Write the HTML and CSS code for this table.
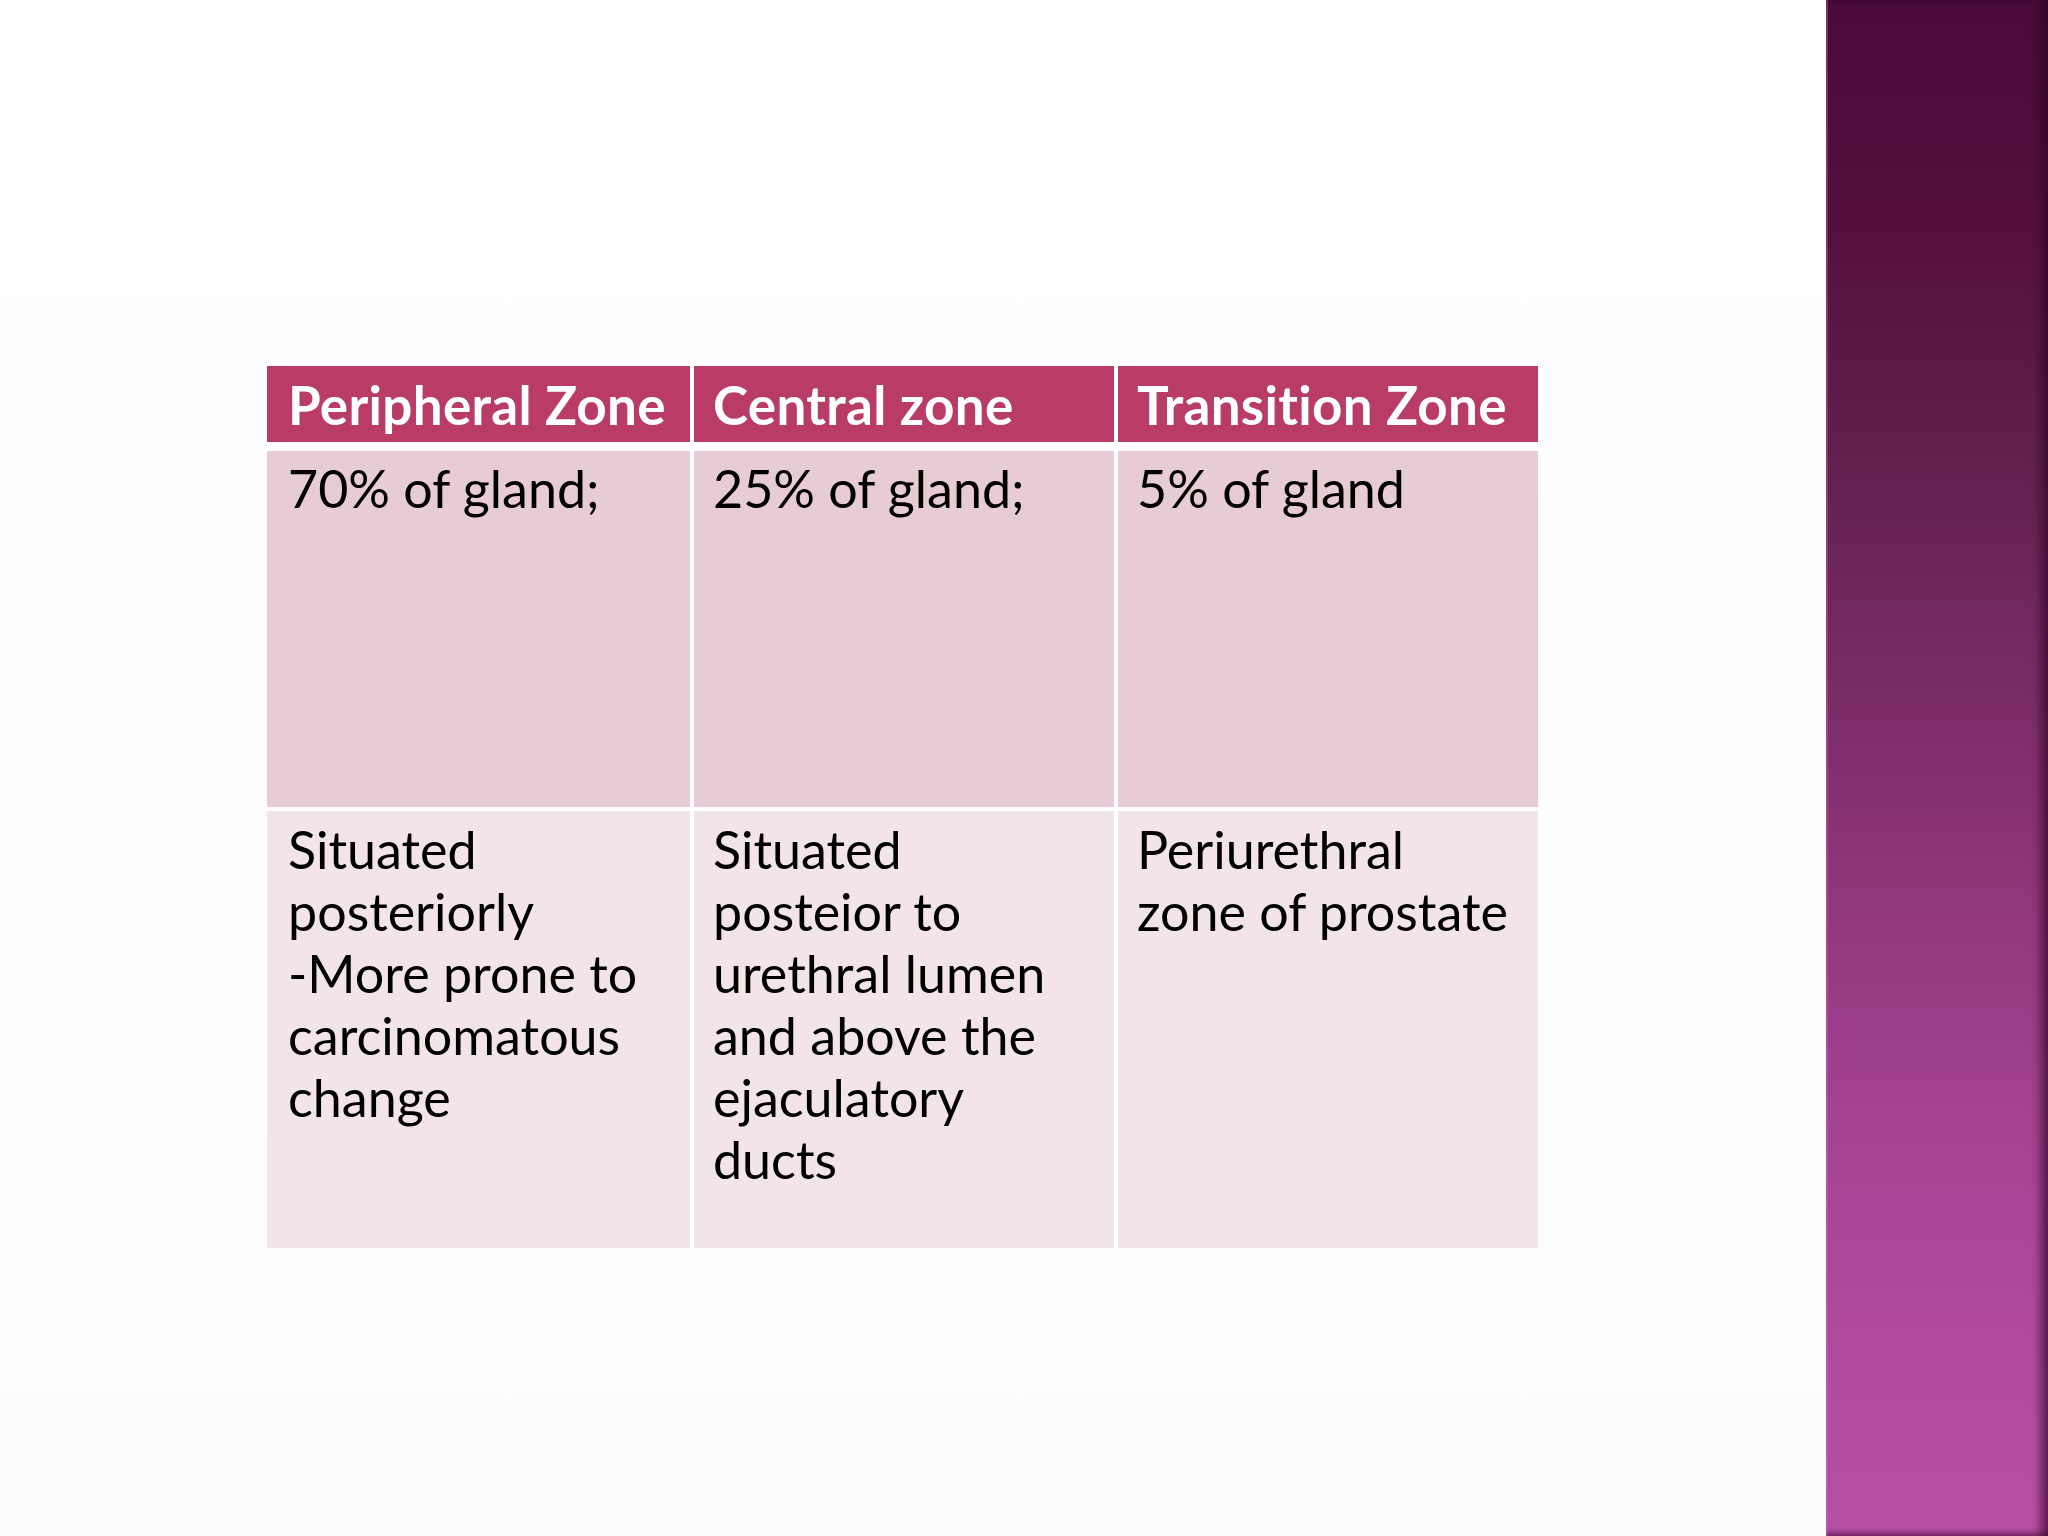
FILE: index.html
```html
<!DOCTYPE html>
<html lang="en">
<head>
<meta charset="utf-8">
<title>Prostate zones</title>
<link rel="stylesheet" href="styles.css">
</head>
<body>
<div class="slide">
  <main class="content">
    <div class="zones">
      <div class="cell head">Peripheral Zone</div>
      <div class="cell head">Central zone</div>
      <div class="cell head">Transition Zone</div>

      <div class="cell dark">70% of gland;</div>
      <div class="cell dark">25% of gland;</div>
      <div class="cell dark">5% of gland</div>

      <div class="cell light">Situated<br>posteriorly<br>-More prone to<br>carcinomatous<br>change</div>
      <div class="cell light">Situated<br>posteior to<br>urethral lumen<br>and above the<br>ejaculatory<br>ducts</div>
      <div class="cell light">Periurethral<br>zone of prostate</div>
    </div>
  </main>
  <aside class="sidebar"></aside>
</div>
</body>
</html>
```

FILE: styles.css
```css
html, body {
  margin: 0;
  padding: 0;
  width: 2048px;
  height: 1536px;
  overflow: hidden;
}

body {
  font-family: Lato, "Noto Sans", sans-serif;
  background: #fefefe;
}

.slide {
  display: flex;
  width: 2048px;
  height: 1536px;
}

.content {
  width: 1826px;
  height: 1536px;
  box-sizing: border-box;
  padding: 366px 0 0 267px;
  background: linear-gradient(180deg, #ffffff 0%, #fdfcfd 100%);
}

.zones {
  display: grid;
  width: 1271px;
  grid-template-columns: 423px 424px 424px;
  grid-template-rows: 76px 365px 441px;
}

.cell {
  box-sizing: border-box;
  font-size: 52px;
  line-height: 62px;
  color: #000000;
  padding: 6px 12px 0 19px;
  border-left: 4px solid #ffffff;
  white-space: nowrap;
}

.cell:nth-child(3n+1) {
  border-left: 0;
  padding-left: 21px;
}

.head {
  background: #b83c64;
  color: #ffffff;
  font-weight: 700;
  font-size: 53px;
  letter-spacing: 0.3px;
  padding-top: 8px;
}

.dark {
  background: #e8ccd5;
  border-top: 9px solid #ffffff;
  padding-top: 6px;
}

.light {
  background: #f2e4e9;
  border-top: 4px solid #ffffff;
  padding-top: 7px;
}

.sidebar {
  width: 222px;
  height: 1536px;
  background: linear-gradient(180deg, #4a0a3a 0%, #55103f 15%, #62204f 30%, #7a2c66 45%, #93387f 60%, #a64494 75%, #b24ca0 90%, #b84fa6 100%);
  box-shadow: inset -10px 0 10px -3px rgba(45, 5, 35, 0.65), inset 2px 0 0 rgba(220, 120, 210, 0.35), inset 0 -6px 6px -3px rgba(60, 10, 50, 0.5);
}
```
